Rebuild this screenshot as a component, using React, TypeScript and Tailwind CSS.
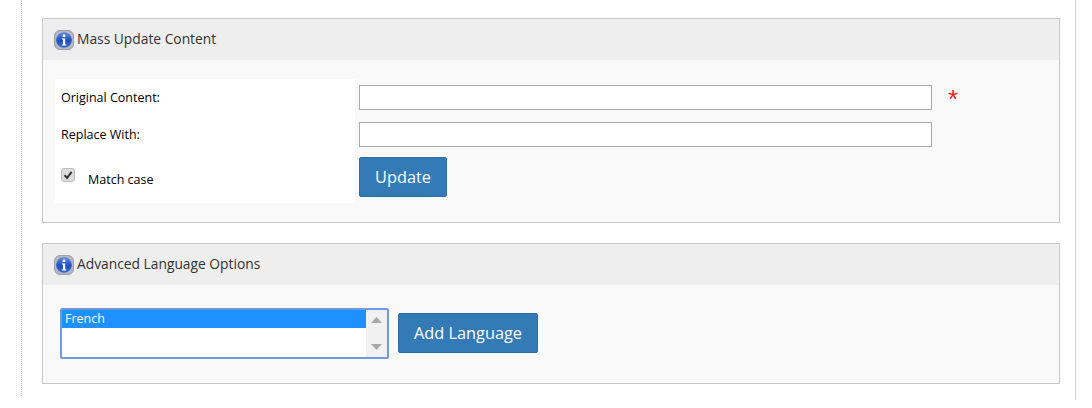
import React from "react";

function InfoIcon() {
    return <svg width="20" height="20" viewBox="0 0 20 20" className="shrink-0">
        <defs>
            <linearGradient id="infoBlue" x1="0" y1="0" x2="0" y2="1">
                <stop offset="0" stopColor="#5f8ae0" />
                <stop offset="0.55" stopColor="#1f4fc0" />
                <stop offset="1" stopColor="#3f6bd0" />
            </linearGradient>
        </defs>
        <rect x="0.5" y="0.5" width="19" height="19" rx="5.5" fill="#b4b8c4" stroke="#9a9eaa" />
        <circle cx="10" cy="10" r="7.8" fill="url(#infoBlue)" />
        <circle cx="10" cy="5.8" r="1.5" fill="#fff" />
        <path d="M8 8.4h3.2v6h1.1v1.2H7.9v-1.2h1.1v-4.8H8z" fill="#fff" />
    </svg>
}

function Panel({title, className, children}: {title: string, className: string, children: React.ReactNode}) {
    return <section className={`border border-[#c8c8c8] bg-[#f9f9f9] ${className}`}>
        <header className="h-[41px] bg-[#eeeeee] flex items-center pl-[11px] gap-[3px] text-[13.8px] text-[#333333]">
            <InfoIcon />
            <span className="pb-[1px]">{title}</span>
        </header>
        {children}
    </section>
}

function TextBox() {
    return <input type="text" className="block w-[573px] h-[25px] bg-white border border-[#a9a9a9]" />
}

function BlueButton({label, className}: {label: string, className: string}) {
    return <button className={`h-[40px] bg-[#337ab7] border border-[#2e6da4] rounded-[2px] text-white text-[16.3px] ${className}`}>
        {label}
    </button>
}

export default function App() {
    return <div className="w-[1092px] h-[408px] bg-white overflow-hidden font-['Open_Sans',sans-serif] text-black">
        <div className="ml-[21px] w-[1055px] h-[400px] border-r border-r-[#d4d4d4] pr-[15px]">
            <div className="h-[396px] border-l border-dotted border-l-[#c4c4c4] pl-[20px] pt-[18px] flex flex-col gap-[20px]">
                <Panel title="Mass Update Content" className="h-[205px]">
                    <div className="flex pl-[12px] pt-[19px]">
                        <div className="w-[300px] h-[124px] bg-white pl-[6px] text-[12.5px] flex flex-col">
                            <div className="h-[37px] flex items-center pt-[2px]">Original Content:</div>
                            <div className="h-[37px] flex items-center pt-[2px]">Replace With:</div>
                            <div className="flex items-center h-[40px] mt-[2px]">
                                <span className="w-[14px] h-[14px] rounded-[3px] bg-[#dcdcdc] border border-[#bdbdbd] flex items-center justify-center">
                                    <svg width="10" height="10" viewBox="0 0 10 10"><path d="M1.500 5.200 4 8l4.600-6.200" fill="none" stroke="#333" strokeWidth="2" /></svg>
                                </span>
                                <span className="ml-[13px] pt-[10px]">Match case</span>
                            </div>
                        </div>
                        <div className="ml-[4px] pt-[6px] flex flex-col">
                            <div className="flex">
                                <TextBox />
                                <span className="ml-[16px] h-[25px] pt-[2px] text-[#ee2222] text-[26px] leading-[25px] font-['Liberation_Sans',sans-serif]">*</span>
                            </div>
                            <div className="mt-[12px]"><TextBox /></div>
                            <BlueButton label="Update" className="w-[88px] mt-[10px]" />
                        </div>
                    </div>
                </Panel>
                <Panel title="Advanced Language Options" className="h-[141px]">
                    <div className="flex items-start pl-[17px] pt-[23px]">
                        <div className="w-[329px] h-[51px] bg-white border-2 border-[#6d9ae0] rounded-[2px] flex text-[12.5px] overflow-hidden">
                            <div className="flex-1">
                                <div className="h-[18px] bg-[#1e90ff] text-white pl-[3px] leading-[18px]">French</div>
                            </div>
                            <div className="w-[21px] bg-[#f1f1f1] flex flex-col items-center justify-between py-[7px]">
                                <svg width="11" height="6" viewBox="0 0 11 6"><path d="M5.500 0 11 6H0z" fill="#a8a8a8" /></svg>
                                <svg width="11" height="6" viewBox="0 0 11 6"><path d="M0 0h11L5.500 6z" fill="#a8a8a8" /></svg>
                            </div>
                        </div>
                        <BlueButton label="Add Language" className="w-[140px] ml-[9px] mt-[5px]" />
                    </div>
                </Panel>
            </div>
        </div>
    </div>
}
